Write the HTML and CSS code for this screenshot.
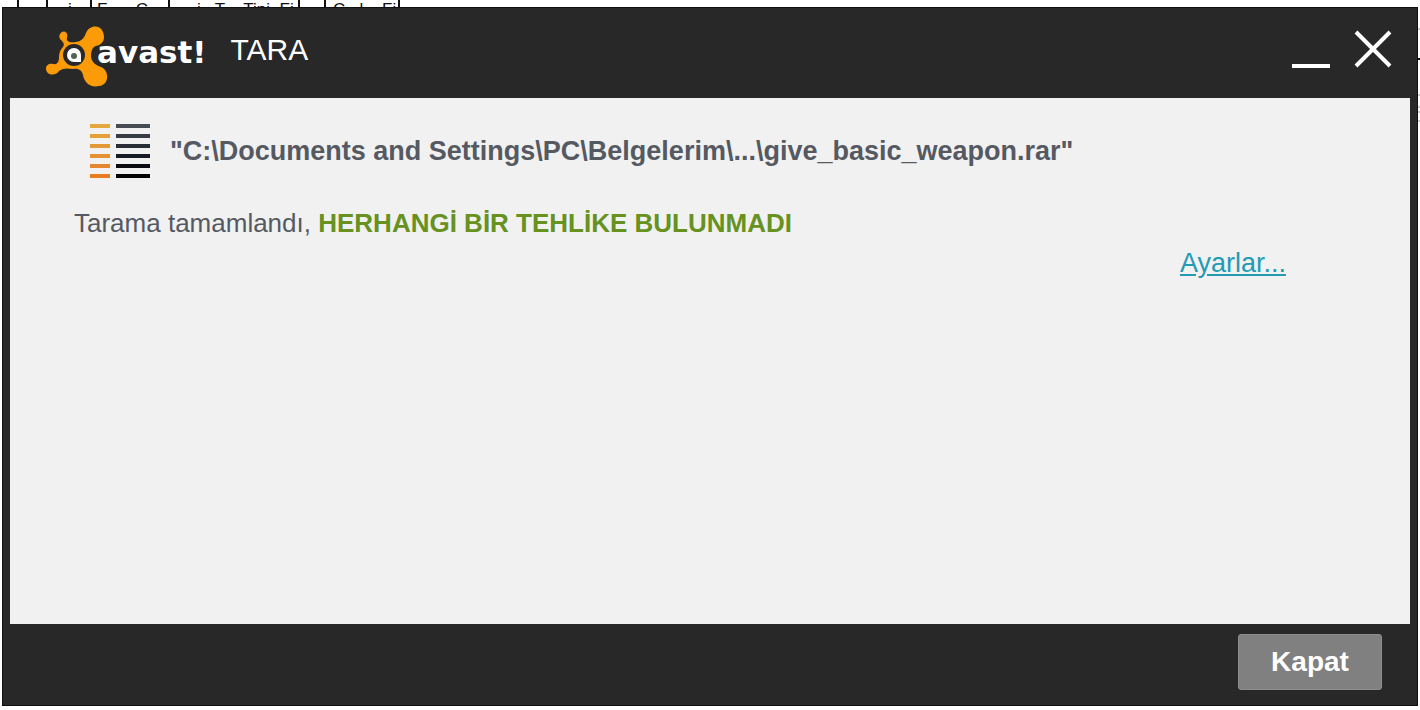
FILE: index.html
```
<!DOCTYPE html>
<html lang="tr">
<head>
    <meta charset="UTF-8">
    <meta name="viewport" content="width=device-width, initial-scale=1.0">
    <title>avast! Tara</title>
    <link rel="stylesheet" href="styles.css">
</head>
<body>
    <!-- Column headings of the list behind the window -->
    <div class="backdrop" aria-hidden="true">
        <span class="col col-name"></span>
        <span class="col col-small"></span>
        <span class="col col-medium">i</span>
        <span class="col col-form">F      C</span>
        <span class="col col-type">i   T    Tipi  Fi</span>
        <span class="col col-gap"></span>
        <span class="col col-last">C   l    Fi</span>
    </div>
    <svg class="backdrop-edge" width="2" height="130" aria-hidden="true">
        <path d="M0 59h2" stroke="#111" stroke-width="2"/>
        <path d="M0 29h2M0 95h2M0 107h2M0 112h2M0 121h2" stroke="#999"/>
    </svg>

    <div class="window">
        <header class="title-bar">
            <div class="logo">
                <svg class="logo-mark" width="66" height="66" viewBox="0 0 66 66" aria-hidden="true">
                    <path d="M15 10C18 5 24 8 22 14C21 18 26 19 31 18C37 17 39 14 41 9C44 1 55 0 58 8C61 16 57 21 51 22C47 23 46 28 46 33C47 39 51 41 56 43C65 47 64 61 54 62C45 64 39 58 38 51C37 46 33 44 28 45C22 44 18 44 14 47C12 51 5 52 2 48C-1 43 3 39 8 40C13 41 14 37 14 33C14 29 15 26 18 23C20 20 18 18 16 16C14 14 14 12 15 10Z" fill="#fb9b08"/>
                    <circle cx="29" cy="31" r="11" fill="#282828"/>
                    <circle cx="29" cy="31" r="7" fill="#fff"/>
                    <path d="M30 31h6v7h-6z" fill="#fff"/>
                    <circle cx="29" cy="32" r="3" fill="#566157"/>
                </svg>
                <span class="logo-name">avast!</span>
            </div>
            <h1>TARA</h1>
            <div class="window-buttons">
                <button class="window-button" aria-label="Simge durumuna küçült">
                    <svg width="38" height="40"><path d="M0 37h38" stroke="#fff" stroke-width="4"/></svg>
                </button>
                <button class="window-button" aria-label="Pencereyi kapat">
                    <svg width="38" height="40"><path d="M2 3l34 34M36 3L2 37" stroke="#fff" stroke-width="4"/></svg>
                </button>
            </div>
        </header>

        <main class="content">
            <div class="file">
                <svg width="60" height="56" aria-hidden="true">
                    <g stroke-width="4">
                        <path d="M0 3h20" stroke="#e5a83e"/>
                        <path d="M0 13h20" stroke="#e4a039"/>
                        <path d="M0 23h20" stroke="#e39935"/>
                        <path d="M0 33h20" stroke="#e69132"/>
                        <path d="M0 43h20" stroke="#e58630"/>
                        <path d="M0 53h20" stroke="#e97c20"/>
                        <path d="M26 3h34" stroke="#474b52"/>
                        <path d="M26 13h34" stroke="#383c44"/>
                        <path d="M26 23h34" stroke="#292d35"/>
                        <path d="M26 33h34" stroke="#181b23"/>
                        <path d="M26 43h34" stroke="#0b0c12"/>
                        <path d="M26 53h34" stroke="#030305"/>
                    </g>
                </svg>
                <h2>"C:\Documents and Settings\PC\Belgelerim\...\give_basic_weapon.rar"</h2>
            </div>
            <p class="status">Tarama tamamlandı, <strong>HERHANGİ BİR TEHLİKE BULUNMADI</strong></p>
            <a class="settings-link" href="#">Ayarlar...</a>
        </main>

        <footer class="footer">
            <button class="close-button">Kapat</button>
        </footer>
    </div>
</body>
</html>
```

FILE: styles.css
```
* {
    box-sizing: border-box;
}
body {
    font-family: "Liberation Sans", Arial, sans-serif;
    background-color: #fff;
    margin: 0;
    min-height: 100vh;
    padding: 7px 2px 4px;
    display: flex;
}
/* Sits behind the window, at the top of the screen */
.backdrop {
    position: absolute;
    top: 0;
    left: 0;
    display: flex;
    height: 8px;
    overflow: hidden;
    color: #111;
    font-size: 17px;
    line-height: 20px;
    white-space: pre;
}
.backdrop-edge {
    position: absolute;
    top: 0;
    right: 0;
}
.col {
    height: 20px;
    border-right: 2px solid #111;
}
.col-name {
    width: 19px;
}
.col-small {
    width: 29px;
}
.col-medium {
    width: 44px;
    padding-left: 20px;
}
.col-form {
    width: 78px;
    padding-left: 5px;
}
.col-type {
    width: 130px;
    padding-left: 27px;
}
.col-gap {
    width: 26px;
}
.col-last {
    width: 74px;
    padding-left: 7px;
}
.window {
    position: relative;
    flex: 1;
    display: flex;
    flex-direction: column;
    background-color: #282828;
    border: 1px solid #111;
}
.title-bar {
    display: flex;
    align-items: flex-start;
    height: 90px;
    padding: 16px 25px 0 42px;
    color: #fff;
}
.logo {
    display: flex;
}
.logo-name {
    position: relative;
    margin-left: -14px;
    font-family: "DejaVu Sans", sans-serif;
    font-size: 31px;
    font-weight: bold;
    line-height: 56px;
}
h1 {
    margin: 0 0 0 24px;
    font-size: 30px;
    font-weight: normal;
    line-height: 52px;
}
.window-buttons {
    display: flex;
    gap: 24px;
    margin-left: auto;
    padding-top: 5px;
}
.window-button {
    padding: 0;
    border: none;
    background: none;
    cursor: pointer;
}
.window-button svg {
    display: block;
}
.content {
    flex: 1;
    margin: 0 7px;
    padding: 25px 64px;
    background-color: #f1f1f1;
    color: #555962;
    display: flex;
    flex-direction: column;
}
.file {
    display: flex;
    align-items: center;
    gap: 20px;
    padding-left: 16px;
}
h2 {
    margin: 0;
    font-size: 27px;
    line-height: 32px;
}
.status {
    margin: 28px 0 0;
    font-size: 26px;
    line-height: 32px;
}
.status strong {
    color: #67921f;
}
.settings-link {
    align-self: flex-end;
    margin-top: 8px;
    margin-right: 60px;
    color: #239bb5;
    font-size: 27px;
    line-height: 32px;
}
.footer {
    display: flex;
    justify-content: flex-end;
    padding: 10px 35px 15px;
}
.close-button {
    min-width: 144px;
    height: 56px;
    border: 1px solid #8e8e8e;
    border-radius: 3px;
    background-color: #808080;
    color: #fff;
    font-family: inherit;
    font-size: 28px;
    font-weight: bold;
    cursor: pointer;
}
```
